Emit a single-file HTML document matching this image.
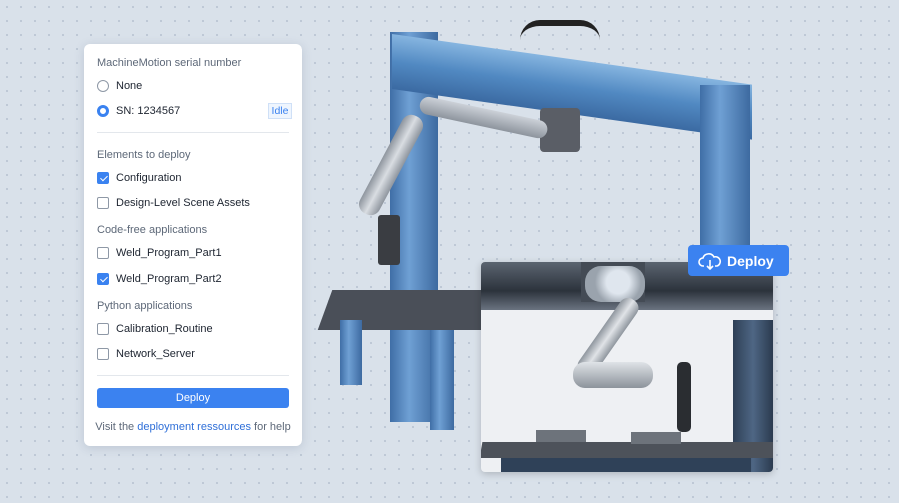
<!DOCTYPE html>
<html><head><style>
*{margin:0;padding:0;box-sizing:border-box}
body{width:899px;height:503px;overflow:hidden;position:relative;font-family:"Liberation Sans",sans-serif;background:#d9e1ea;background-image:radial-gradient(#b9c4d2 0.8px,transparent 1.2px);background-size:14px 14px}
.abs{position:absolute}
.panel{left:84px;top:44px;width:218px;height:402px;background:#fff;border-radius:6px;box-shadow:0 2px 10px rgba(60,80,110,.18)}
.h{position:absolute;left:13px;font-size:11px;color:#5d6878}
.it{position:absolute;left:13px;font-size:11px;color:#1d2430;display:flex;align-items:center}
.rb{width:12px;height:12px;border-radius:50%;border:1px solid #8e98a6;margin-right:7px}
.rb.on{border:3.5px solid #3a82f0;background:#fff}
.cb{width:12px;height:12px;border-radius:2px;border:1px solid #8e98a6;margin-right:7px;position:relative}
.cb.on{background:#3a82f0;border-color:#3a82f0}
.cb.on:after{content:"";position:absolute;left:3.5px;top:1px;width:3px;height:6px;border:solid #fff;border-width:0 1.5px 1.5px 0;transform:rotate(45deg)}
.sep{position:absolute;left:13px;right:13px;height:1px;background:#e3e7ec}
.blue{background:linear-gradient(90deg,#3f6ea6,#6fa0d4 40%,#3d6aa0)}
</style></head><body>
<div class="abs blue" style="left:390px;top:32px;width:48px;height:390px"></div>
<div class="abs" style="left:392px;top:34px;width:360px;height:55px;background:linear-gradient(180deg,#86b5e0,#5189c2 50%,#3b6aa2);transform:skewY(8deg);transform-origin:left top"></div>
<div class="abs blue" style="left:700px;top:85px;width:50px;height:215px"></div>
<div class="abs" style="left:520px;top:20px;width:80px;height:20px;border-top:6px solid #222;border-radius:20px 20px 0 0"></div>
<div class="abs" style="left:540px;top:108px;width:40px;height:44px;background:#5a5e66;border-radius:4px"></div>
<div class="abs" style="left:420px;top:95px;width:130px;height:18px;background:linear-gradient(#ccd1d8,#8d949d);border-radius:9px;transform:rotate(12deg);transform-origin:left"></div>
<div class="abs" style="left:380px;top:110px;width:22px;height:110px;background:linear-gradient(90deg,#8e959e,#d9dde2,#8e959e);border-radius:10px;transform:rotate(28deg)"></div>
<div class="abs" style="left:378px;top:215px;width:22px;height:50px;background:#3a3d42;border-radius:3px"></div>
<div class="abs" style="left:325px;top:290px;width:170px;height:40px;background:#4a4f58;transform:skewX(-20deg)"></div>
<div class="abs blue" style="left:340px;top:320px;width:22px;height:65px"></div>
<div class="abs blue" style="left:430px;top:330px;width:24px;height:100px"></div>
<div class="abs" style="left:481px;top:262px;width:292px;height:210px;border-radius:4px;overflow:hidden;background:#eef0f3;box-shadow:0 2px 8px rgba(0,0,0,.2)">
 <div class="abs" style="left:0;top:0;width:292px;height:48px;background:linear-gradient(#5b6470,#2c333c 60%,#6a7380)"></div>
 <div class="abs" style="left:100px;top:0;width:64px;height:40px;background:#444b55"></div>
 <div class="abs" style="left:104px;top:4px;width:60px;height:36px;background:radial-gradient(circle at 55% 45%,#dfe6ee 30%,#9aa3ad 60%);border-radius:16px"></div>
 <div class="abs" style="left:117px;top:30px;width:20px;height:90px;background:linear-gradient(90deg,#8f969e,#e0e3e7,#8f969e);border-radius:9px;transform:rotate(35deg)"></div>
 <div class="abs" style="left:92px;top:100px;width:80px;height:26px;background:linear-gradient(#dfe3e7,#8c939b);border-radius:12px"></div>
 <div class="abs" style="left:196px;top:100px;width:14px;height:70px;background:#2a2d31;border-radius:5px"></div>
 <div class="abs" style="left:252px;top:58px;width:40px;height:152px;background:linear-gradient(90deg,#2e3f55,#4e6684,#2b3b4f)"></div>
 <div class="abs" style="left:0;top:180px;width:300px;height:16px;background:#4d525a;transform:skewX(-10deg)"></div>
 <div class="abs" style="left:55px;top:168px;width:50px;height:12px;background:#6d737b"></div>
 <div class="abs" style="left:150px;top:170px;width:50px;height:12px;background:#6d737b"></div>
 <div class="abs" style="left:20px;top:196px;width:250px;height:14px;background:#2f4158"></div>
</div>
<div class="abs" style="left:688px;top:245px;width:101px;height:31px;background:#3b82f0;border-radius:4px;color:#fff;font-size:14px;font-weight:bold;display:flex;align-items:center;padding-left:10px">
 <svg width="24" height="18" viewBox="0 0 24 18" style="margin-right:5px"><path d="M6 14H5a4 4 0 0 1 0-8 6 6 0 0 1 11-1 4.5 4.5 0 0 1 3 9h-2" fill="none" stroke="#fff" stroke-width="1.6"/><path d="M12 8v9M9 14l3 3 3-3" fill="none" stroke="#fff" stroke-width="1.6"/></svg>Deploy</div>
<div class="abs panel">
 <div class="h" style="top:13px">MachineMotion serial number</div>
 <div class="it" style="top:36px"><span class="rb"></span>None</div>
 <div class="it" style="top:61px"><span class="rb on"></span>SN: 1234567</div>
 <div class="abs" style="left:184px;top:59px;width:24px;height:16px;border:1px solid #cfe0f7;background:#eef5fe;color:#3a82f0;font-size:10.5px;text-align:center;line-height:14px">Idle</div>
 <div class="sep" style="top:88px"></div>
 <div class="h" style="top:105px">Elements to deploy</div>
 <div class="it" style="top:128px"><span class="cb on"></span>Configuration</div>
 <div class="it" style="top:153px"><span class="cb"></span>Design-Level Scene Assets</div>
 <div class="h" style="top:180px">Code-free applications</div>
 <div class="it" style="top:203px"><span class="cb"></span>Weld_Program_Part1</div>
 <div class="it" style="top:229px"><span class="cb on"></span>Weld_Program_Part2</div>
 <div class="h" style="top:256px">Python applications</div>
 <div class="it" style="top:279px"><span class="cb"></span>Calibration_Routine</div>
 <div class="it" style="top:304px"><span class="cb"></span>Network_Server</div>
 <div class="sep" style="top:331px"></div>
 <div class="abs" style="left:13px;top:344px;width:192px;height:20px;background:#3b82f0;border-radius:3px;color:#fff;font-size:11px;text-align:center;line-height:20px">Deploy</div>
 <div class="abs" style="left:0;width:218px;top:377px;text-align:center;font-size:11px;color:#5d6878">Visit the <span style="color:#2f6fd8">deployment ressources</span> for help</div>
</div>
</body></html>
